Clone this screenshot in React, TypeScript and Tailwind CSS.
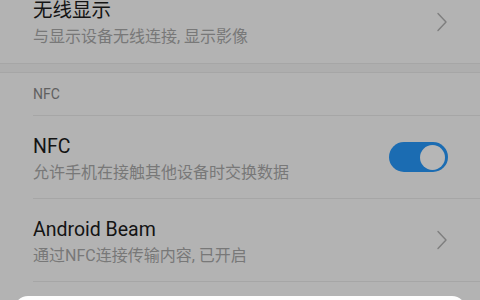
import React from 'react';

function Chevron() {
  return (
    <svg width="12" height="20" viewBox="0 0 12 20" className="shrink-0">
      <path d="M2 1.5 L10 10 L2 18.5" fill="none" stroke="#7e7e7e" strokeWidth="1.4" strokeLinecap="round" strokeLinejoin="round" />
    </svg>
  );
}

function Toggle() {
  return (
    <div className="w-[59px] h-[30px] rounded-full bg-[#1b6cb2] flex items-center justify-end pr-[3px]">
      <div className="w-[25px] h-[25px] rounded-full bg-[#b6b6b6]" />
    </div>
  );
}

function Row({ title, sub, right }: { title: string; sub: string; right: React.ReactNode }) {
  return (
    <div className="h-[83px] pl-[33px] flex">
      <div className="flex-1 flex border-b border-[#a6a6a6]">
        <div className="flex-1 pt-[18px]">
          <div className="text-[19.5px] leading-[26px] text-[#141414]">{title}</div>
          <div className="text-[16px] leading-[26px] text-[#787878]">{sub}</div>
        </div>
        <div className="flex items-center pr-[32px]">{right}</div>
      </div>
    </div>
  );
}

export default function App() {
  return (
    <div
      className="w-[480px] h-[300px] overflow-hidden bg-[#b3b3b3] relative"
      style={{ fontFamily: 'Roboto, "Noto Sans CJK SC", sans-serif' }}
    >
      <div className="-mt-[20px]">
        <div className="h-[83px] pl-[33px] flex">
          <div className="flex-1 pt-[18px]">
            <div className="text-[19.5px] leading-[26px] text-[#141414]">无线显示</div>
            <div className="text-[16px] leading-[26px] text-[#787878]">与显示设备无线连接, 显示影像</div>
          </div>
          <div className="flex items-center pr-[32px]">
            <Chevron />
          </div>
        </div>
        <div className="h-[10px] bg-[#aeaeae] border-y border-[#a6a6a6]" />
        <div className="pl-[33px]">
          <div className="h-[43px] flex items-center border-b border-[#a6a6a6] text-[14px] text-[#606060]">NFC</div>
        </div>
        <Row title="NFC" sub="允许手机在接触其他设备时交换数据" right={<Toggle />} />
        <Row title="Android Beam" sub="通过NFC连接传输内容, 已开启" right={<Chevron />} />
      </div>
      <div className="absolute left-[14px] right-[14px] top-[296px] h-[30px] rounded-t-[14px] bg-[#fdfdfd]" />
    </div>
  );
}
